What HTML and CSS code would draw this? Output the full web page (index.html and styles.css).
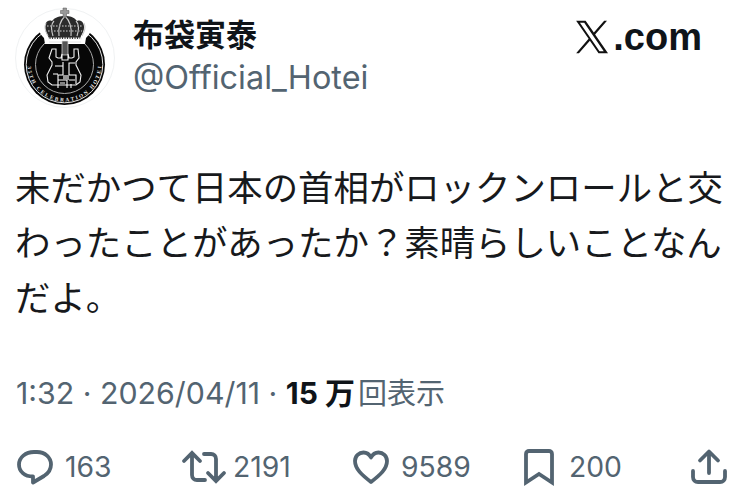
FILE: index.html
```html
<!DOCTYPE html>
<html lang="ja">
<head>
<meta charset="utf-8">
<title>布袋寅泰</title>
<link rel="stylesheet" href="styles.css">
</head>
<body>
<main class="card">
  <header class="head">
    <svg class="avatar" viewBox="0 0 100 100" aria-hidden="true">
      <circle cx="50" cy="50" r="49.500" fill="#fff" stroke="#f0f2f3"/>
      <circle cx="49.500" cy="56.500" r="40.500" fill="#070707"/>
      <circle cx="49.500" cy="56.500" r="38.300" fill="none" stroke="#e8e8e8" stroke-width="1"/>
      <circle cx="49.500" cy="56.500" r="29" fill="none" stroke="#aaa" stroke-width="1"/>
      <path id="ringpath" d="M12.500 56.500a37 37 0 0 0 74 0" fill="none"/>
      <text class="ringtext"><textPath href="#ringpath" startOffset="2" textLength="112" lengthAdjust="spacing">35TH CELEBRATION HOTEI</textPath></text>
      <path d="M29 30c-4-4-6-8-5-12 1-5 7-7 11-5 3-4 9-6 15-6s12 2 15 6c4-2 10 0 11 5 1 4-1 8-5 12l-1 6H30z" fill="#fff"/>
      <path d="M33 28c-3-5-4-9-2-13 1-2 3-3 6-2 3-4 8-5 13-5s9 1 12 5c3-1 5 0 6 2 2 4 1 8-2 13l-1 3H34z" fill="#2b2b2b"/>
      <path d="M33 28c-3-5-4-9-2-13M38 28c-2-6-2-12 1-15M44 28c-1-8 0-14 6-20M56 28c1-8 0-14-6-20M62 28c2-6 2-12-1-15M67 28c3-5 4-9 2-13" fill="none" stroke="#ccc" stroke-width="1.100"/>
      <path d="M32 18h36M33 23h34" stroke="#999" stroke-width="1.300" stroke-dasharray="1.600 1.400"/>
      <path d="M33 30.500h34" stroke="#eee" stroke-width="1.800" stroke-dasharray="1.600 .9"/>
      <path d="M34 34h32" stroke="#ddd" stroke-width=".8"/>
      <path d="M48 0h3.500v2.500H54v3h-2.500V9H48V5.500h-2.500v-3H48z" fill="#999" stroke="#555" stroke-width=".5"/>
      <path d="M47 33h6v14h-6z" fill="#555" stroke="#ddd" stroke-width=".7"/>
      <path d="M37 41h4v8l2 1h3l1-4v6h6v-6l1 4h3l2-1v-8h4l1 9-3 4v3l5 10-1 7-4 3H37l-4-3-1-7 5-10v-3l-3-4z" fill="#070707" stroke="#f2f2f2" stroke-width="1.100"/>
      <path d="M40 58h8v9h-5v13M60 55h-6v12h7v9M43 72h9v8M48 67V54M54 72h6M38 66h5M56 76v4M45 75h5" fill="none" stroke="#fff" stroke-width="1.100"/>
      <path d="M48 67h6v5h-6z" fill="#999"/>
    </svg>
    <div class="who">
      <div class="name">布袋寅泰</div>
      <div class="handle">@Official_Hotei</div>
    </div>
    <div class="brand">
      <svg class="xlogo" viewBox="0 0 24 24" aria-hidden="true"><path d="M14.200 10.200 22.600.5h-2l-7.300 8.400L7.500.5H.8l8.800 12.800L.8 23.500h2l7.700-8.900 6.100 8.900h6.700zM3.500 2h3l13.800 20h-3z" fill="#111"/></svg><span class="dotcom">.com</span>
    </div>
  </header>
  <p class="body">未だかつて日本の首相がロックンロールと交わったことがあったか？素晴らしいことなんだよ。</p>
  <div class="meta">1:32 · 2026/04/11 · <b class="views">15 万</b><span class="cjk">回表示</span></div>
  <footer class="actions">
    <div class="act">
      <svg class="ico" viewBox="0 0 36 36" aria-hidden="true"><path d="M17 3h3c8 0 14 5.500 14 12.500 0 5-3 9-7 11.500l-11 6.500v-6C7.500 27.500 2 22.500 2 15.500 2 8.500 8.500 3 17 3z" /></svg>
      <span>163</span>
    </div>
    <div class="act act-rt">
      <svg class="ico ico-rt" viewBox="0 0 44 32" aria-hidden="true"><path d="M2 10 10 2l8 8M10 3v21c0 3 2 5 5 5h8M22 3h7c3 0 5 2 5 5v21M26 22l8 8 8-8" /></svg>
      <span>2191</span>
    </div>
    <div class="act">
      <svg class="ico ico-like" viewBox="0 0 36 36" aria-hidden="true"><path d="M18 33C9 26 2 20 2 12c0-5 4-8.500 8.500-8.500 3.500 0 6 2 7.500 5 1.500-3 4-5 7.500-5C30 3.500 34 7 34 12c0 8-7 14-16 21z" /></svg>
      <span>9589</span>
    </div>
    <div class="act act-mark">
      <svg class="ico ico-mark" viewBox="0 0 30 36" aria-hidden="true"><path d="M2 33.500V5c0-2 1.500-3 3-3h20c1.500 0 3 1 3 3v28.500L15 25z" /></svg>
      <span>200</span>
    </div>
    <svg class="ico ico-share" viewBox="0 0 36 36" aria-hidden="true"><path d="M18 24V3M9 11.500 18 2.500l9 9M2 22v6c0 3 2 5 5 5h22c3 0 5-2 5-5v-6" /></svg>
  </footer>
</main>
</body>
</html>
```
FILE: styles.css
```css
* { box-sizing: border-box; }
html, body { margin: 0; background: #fff; }
body {
  width: 744px;
  height: 499px;
  overflow: hidden;
  font-family: Inter, "Noto Sans CJK JP", "Liberation Sans", sans-serif;
  color: #0f1419;
}
.card { display: flex; flex-direction: column; padding: 8px 21px 0 15px; }
.head { display: flex; align-items: flex-start; }
.avatar { width: 100px; height: 100px; flex: none; overflow: visible; }
.ringtext { font-family: "Liberation Serif", serif; font-weight: 700; font-size: 5.300px; fill: #eee; }
.who { margin-left: 18px; flex: 1; padding-top: 5px; }
.name { font-family: "Noto Sans CJK JP", sans-serif; font-weight: 700; font-size: 31px; line-height: 40px; }
.handle { font-size: 32.400px; line-height: 44px; margin-top: 3px; color: #536471; }
.brand { display: flex; align-items: center; padding: 9px 21px 0 0; }
.xlogo { width: 34px; height: 34px; }
.dotcom { font-family: "Liberation Sans", sans-serif; font-weight: 700; font-size: 38px; line-height: 40px; margin-left: 4px; }
.body {
  margin: 50px -6px 0 0;
  font-family: "Noto Sans CJK JP", sans-serif;
  font-size: 35.400px;
  line-height: 55px;
  color: #17191c;
}
.meta {
  margin: 50px 0 0 1px;
  font-size: 30.300px;
  line-height: 40px;
  color: #536471;
}
.views { font-weight: 700; color: #0f1419; font-size: 30px; }
.cjk { font-size: 29px; margin-left: 3px; }
.actions {
  display: grid;
  grid-template-columns: 165px 171px 171px 167px 1fr;
  align-items: center;
  margin-top: 33px;
  padding: 0 0 0 2px;
  font-size: 28.300px;
  line-height: 40px;
  color: #536471;
}
.act { display: flex; align-items: center; gap: 12px; }
.act-rt { gap: 7px; }
.act-mark { gap: 15px; }
.ico { width: 36px; height: 36px; fill: none; stroke: #536471; stroke-width: 3.800; stroke-linejoin: round; stroke-linecap: round; overflow: visible; flex: none; }
.ico-rt { width: 44px; height: 32px; stroke-linejoin: miter; }
.ico-mark { width: 30px; stroke-linejoin: miter; stroke-linecap: butt; }
```
